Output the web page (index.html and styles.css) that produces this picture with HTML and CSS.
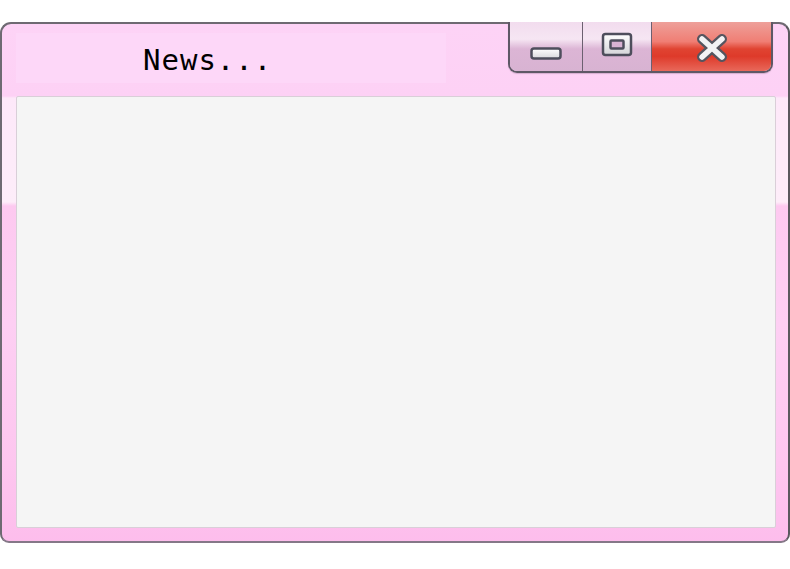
FILE: index.html
```html
<!DOCTYPE html>
<html>
<head>
<meta charset="utf-8">
<link rel="stylesheet" href="styles.css">
</head>
<body>
<div class="window">
  <div class="titlebar">
    <div class="title-area"><span class="title">News...</span></div>
    <div class="buttons">
      <div class="btn btn-min">
        <svg width="32" height="14" viewBox="0 0 32 14"><defs><linearGradient id="g1" x1="0" y1="0" x2="0" y2="1"><stop offset="0" stop-color="#ffffff"/><stop offset="1" stop-color="#d8d8dc"/></linearGradient></defs><rect x="1.5" y="1.5" width="29" height="10" rx="2.5" fill="url(#g1)" stroke="#4e4e5c" stroke-width="2.5"/></svg>
      </div>
      <div class="btn btn-max">
        <svg width="32" height="25" viewBox="0 0 32 25"><defs><linearGradient id="g2" x1="0" y1="0" x2="0" y2="1"><stop offset="0" stop-color="#ffffff"/><stop offset="1" stop-color="#d4d4d8"/></linearGradient></defs><rect x="2" y="2" width="28" height="21" rx="2.5" fill="url(#g2)" stroke="#4e4e5c" stroke-width="2.5"/><rect x="9.5" y="8.5" width="13" height="8" rx="1" fill="#d9b3d3" stroke="#4e4e5c" stroke-width="2.5"/></svg>
      </div>
      <div class="btn btn-close">
        <svg width="32" height="28" viewBox="0 0 32 28"><path d="M6 5 L26 23 M26 5 L6 23" fill="none" stroke="#55555f" stroke-width="10" stroke-linecap="round"/><path d="M6 5 L26 23 M26 5 L6 23" fill="none" stroke="#f2f2f4" stroke-width="5.5" stroke-linecap="round"/></svg>
      </div>
    </div>
  </div>
  <div class="content"></div>
</div>
</body>
</html>
```
FILE: styles.css
```css
html, body {
  margin: 0;
  padding: 0;
  background: #ffffff;
}
body {
  width: 790px;
  height: 569px;
  overflow: hidden;
}
.window {
  margin-top: 22px;
  width: 790px;
  height: 521px;
  box-sizing: border-box;
  border: 2px solid #6e6a72;
  border-right-color: #5a585e;
  border-bottom-color: #857888;
  border-radius: 11px 11px 9px 9px;
  background: linear-gradient(to bottom,
    #fdd3f6 0px, #fdd1f5 72px,
    #fde8f9 74px, #fdedf9 178px,
    #fdc9f0 182px, #fdcff3 300px, #fdc6ef 440px, #fdbdec 520px);
  display: flex;
  flex-direction: column;
  padding: 0 12px 13px 14px;
}
.titlebar {
  height: 72px;
  display: flex;
  justify-content: space-between;
  align-items: flex-start;
}
.title-area {
  margin-top: 9px;
  width: 430px;
  height: 50px;
  background: #fdd7f8;
  box-sizing: border-box;
  padding-left: 127px;
  padding-top: 12px;
}
.title {
  font-family: "DejaVu Sans Mono", monospace;
  font-size: 29px;
  letter-spacing: 1px;
  line-height: 30px;
  color: #000;
}
.buttons {
  margin-top: -2px;
  margin-right: 3px;
  display: flex;
  height: 51px;
  box-sizing: border-box;
  border: 2px solid #5e5866;
  border-top: none;
  border-radius: 0 0 9px 9px;
  overflow: hidden;
  box-shadow: 0 1px 1px rgba(120,90,120,0.3);
}
.btn {
  display: flex;
  align-items: center;
  justify-content: center;
  height: 100%;
}
.btn-min {
  width: 73px;
  padding-top: 14px;
  box-sizing: border-box;
  background: linear-gradient(to bottom, #f2dcee 0%, #f6e6f3 35%, #dcb5d5 55%, #d8b3d2 100%);
  border-right: 1.5px solid #6c6070;
}
.btn-max {
  width: 69px;
  padding-bottom: 4px;
  box-sizing: border-box;
  background: linear-gradient(to bottom, #f2dcee 0%, #f6e6f3 35%, #dcb5d5 55%, #d8b3d2 100%);
  border-right: 1.5px solid #6c6070;
}
.btn-close {
  width: 119px;
  padding-top: 2px;
  box-sizing: border-box;
  background: linear-gradient(to bottom, #eea09a 0%, #f07e74 40%, #e04432 55%, #de3a2a 70%, #e8685a 100%);
}
.content {
  flex: 1;
  background: #f5f5f5;
  border: 1px solid #d9cfd8;
  border-radius: 2px;
}
```
